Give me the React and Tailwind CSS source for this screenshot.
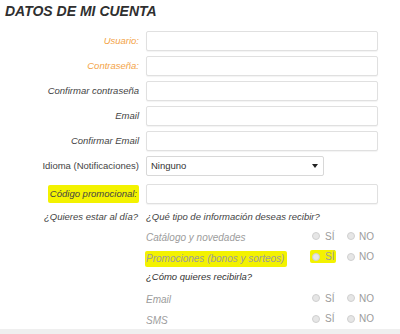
import React from 'react';

const font = { fontFamily: '"Liberation Sans", Arial, sans-serif' };

function Field({ label, labelClass = 'text-[#444] italic', highlight = false, children, className = '' }) {
  return (
    <div className={`flex items-center h-[20px] ${className}`}>
      <div className="w-[141px] flex justify-end pr-[2px]">
        <span
          className={`text-[9.5px] leading-[18px] ${labelClass} ${
            highlight ? 'bg-[#f3f200] px-[2px] rounded-[2px]' : ''
          }`}
        >
          {label}
        </span>
      </div>
      <div className="ml-[5px]">{children}</div>
    </div>
  );
}

function TextBox() {
  return (
    <div className="w-[232px] h-[20px] bg-white border border-[#e0e0e0] rounded-[2px] shadow-[0_1px_1px_rgba(0,0,0,0.05)]" />
  );
}

function Radio() {
  return <span className="inline-block w-[8px] h-[8px] rounded-full border border-[#d0d0d0] bg-[#e6e6e6]" />;
}

function OptionRow({ text, highlight = false }) {
  return (
    <div className="flex items-center h-[20.6px]">
      <div className="w-[166px]">
        <span
          className={`text-[10px] italic leading-[16px] text-[#9c9c9c] ${
            highlight ? 'bg-[#f3f200] pr-[3px] pl-[1px] -ml-[1px] rounded-[2px] inline-block' : ''
          }`}
        >
          {text}
        </span>
      </div>
      <div className="w-[35px] flex">
        <span
          className={`flex items-center gap-[5px] ${
            highlight ? 'bg-[#f3f200] -ml-[2px] pl-[2px] pr-[2px] rounded-[2px]' : ''
          }`}
        >
          <Radio />
          <span className="text-[10px] text-[#9c9c9c] leading-[13px]">SÍ</span>
        </span>
      </div>
      <div className="flex items-center gap-[4px]">
        <Radio />
        <span className="text-[10px] text-[#9c9c9c] leading-[13px]">NO</span>
      </div>
    </div>
  );
}

export default function App() {
  return (
    <div className="w-[400px] h-[334px] bg-white overflow-hidden relative" style={font}>
      <div className="h-[31px] pt-[3px] pl-[5px]">
        <h1 className="text-[14px] leading-[16px] font-bold italic text-[#2f2f2f]">
          DATOS DE MI CUENTA
        </h1>
      </div>

      <div className="flex flex-col gap-[5px]">
        <Field label="Usuario:" labelClass="text-[#f3a448] italic">
          <TextBox />
        </Field>
        <Field label="Contraseña:" labelClass="text-[#f3a448] italic">
          <TextBox />
        </Field>
        <Field label="Confirmar contraseña">
          <TextBox />
        </Field>
        <Field label="Email">
          <TextBox />
        </Field>
        <Field label="Confirmar Email">
          <TextBox />
        </Field>
        <Field label="Idioma (Notificaciones)" labelClass="text-[#444]">
          <div className="w-[178px] h-[20px] bg-white border border-[#d8d8d8] rounded-[2px] flex items-center justify-between pl-[4px] pr-[5px]">
            <span className="text-[9.5px] text-[#333]">Ninguno</span>
            <svg width="6" height="4" viewBox="0 0 6 4">
              <path d="M0 0 L6 0 L3 4 Z" fill="#222" />
            </svg>
          </div>
        </Field>
      </div>

      <Field label="Código promocional:" highlight className="mt-[8px]">
        <TextBox />
      </Field>

      <div className="flex items-center h-[14px] mt-[6px]">
        <div className="w-[141px] flex justify-end pr-[3px]">
          <span className="text-[9.5px] italic text-[#444]">¿Quieres estar al día?</span>
        </div>
        <span className="ml-[5px] text-[9.5px] italic text-[#444]">
          ¿Qué tipo de información deseas recibir?
        </span>
      </div>

      <div className="ml-[146px] mt-[2px] flex flex-col">
        <OptionRow text="Catálogo y novedades" />
        <OptionRow text="Promociones (bonos y sorteos)" highlight />
        <div className="flex items-center h-[20.6px]">
          <span className="text-[9.5px] italic text-[#333]">¿Cómo quieres recibirla?</span>
        </div>
        <OptionRow text="Email" />
        <OptionRow text="SMS" />
      </div>

      <div className="absolute left-0 right-0 bottom-0 h-[5px] bg-[#efefef]" />
    </div>
  );
}
